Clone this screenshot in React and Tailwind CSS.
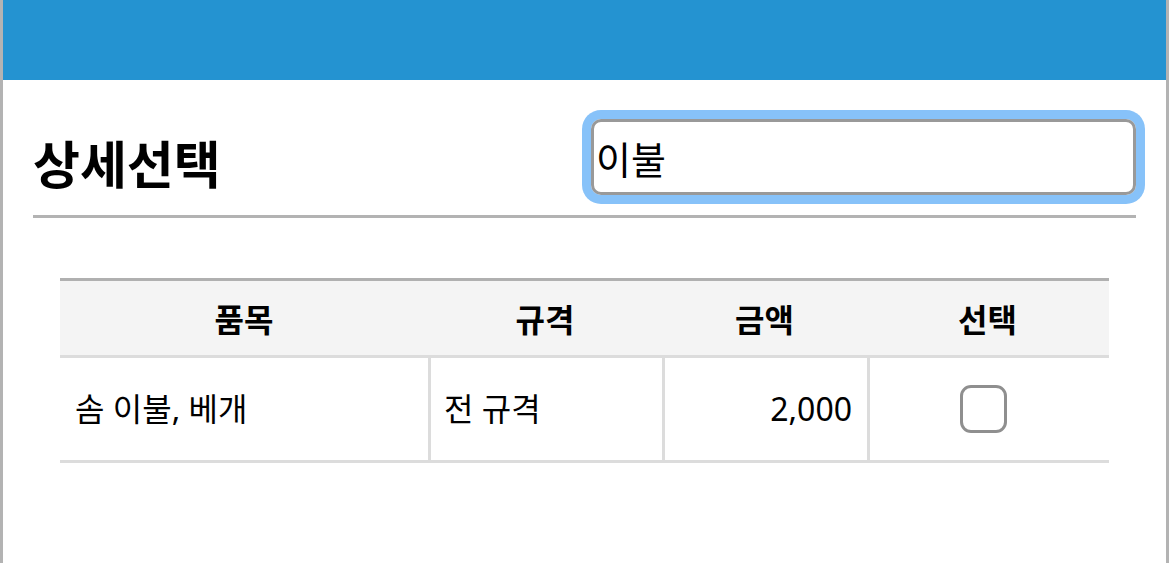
import React, { useState } from "react";

const items = [{ id: 1, name: "솜 이불, 베개", spec: "전 규격", price: 2000 }];

const App = () => {
  const [query, setQuery] = useState("이불");
  const [checked, setChecked] = useState({});

  return (
    <div className="min-h-screen bg-white border-x-[3px] border-[#b3b3b3] font-['Noto_Sans','Noto_Sans_CJK_KR',sans-serif] text-black">
      {/* top bar */}
      <div className="h-[80px] bg-[#2493d1]" />

      <div className="px-[30px]">
        {/* title + search */}
        <div className="flex justify-between items-start">
          <h1 className="mt-[57px] mb-[2px] text-[51px] leading-[51px] font-bold font-['Noto_Sans_CJK_KR',sans-serif]">
            상세선택
          </h1>
          <input
            value={query}
            onChange={(e) => setQuery(e.target.value)}
            className="mt-[39px] w-[545px] h-[76px] border-[3px] border-[#999] rounded-[10px] ring-[9px] ring-[#87c2f9] outline-none pl-[2px] text-[38px] font-['Noto_Sans_CJK_KR',sans-serif]"
          />
        </div>
        <div className="mt-[20px] h-[3px] bg-[#b3b3b3]" />

        {/* result table */}
        <div className="mx-[27px] mt-[60px]">
          <div className="grid grid-cols-[368px_234px_205px_241px] bg-[#f4f4f4] border-t-[3px] border-[#b0b0b0] border-b-[3px] border-b-[#dcdcdc] h-[80px] items-center text-[32px] font-bold font-['Noto_Sans_CJK_KR',sans-serif]">
            <div className="text-center">품목</div>
            <div className="text-center">규격</div>
            <div className="text-center">금액</div>
            <div className="text-center">선택</div>
          </div>
          {items.map((item) => (
            <div
              key={item.id}
              className="grid grid-cols-[368px_234px_205px_241px] h-[105px] border-b-[3px] border-[#dcdcdc] text-[32px]"
            >
              <div className="flex items-center pl-[15px]">{item.name}</div>
              <div className="flex items-center pl-[13px] border-l-[3px] border-[#dcdcdc]">{item.spec}</div>
              <div className="flex items-center justify-end pr-[15px] border-l-[3px] border-[#dcdcdc]">
                {item.price.toLocaleString("en-US")}
              </div>
              <div className="flex items-center justify-center border-l-[3px] border-[#dcdcdc]">
                <button
                  onClick={() => setChecked((c) => ({ ...c, [item.id]: !c[item.id] }))}
                  className="w-[47px] h-[48px] border-[3px] border-[#8f8f8f] rounded-[11px] mr-[12px] flex items-center justify-center"
                >
                  {checked[item.id] && <span className="block w-[25px] h-[25px] rounded-[5px] bg-[#2493d1]" />}
                </button>
              </div>
            </div>
          ))}
        </div>
      </div>
    </div>
  );
};

export default App;
